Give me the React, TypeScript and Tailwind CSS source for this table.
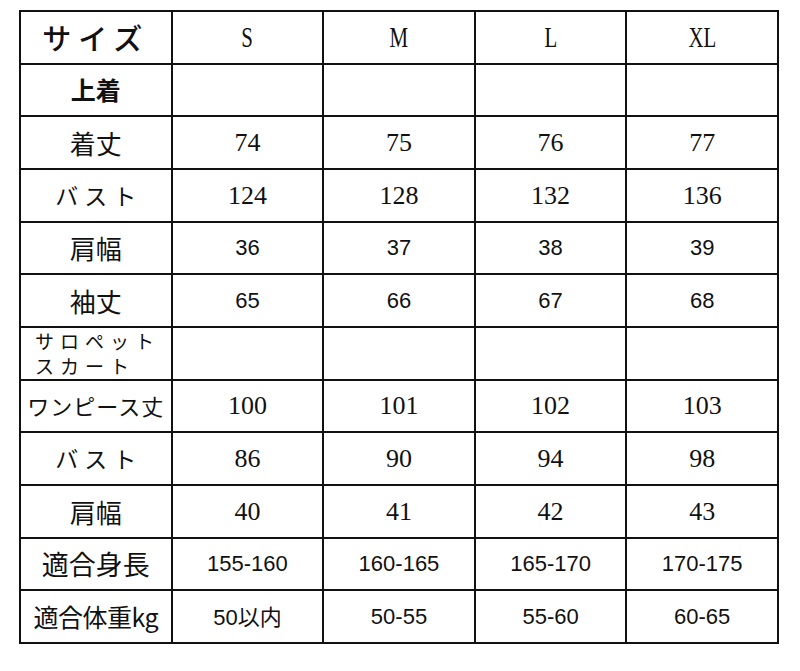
import React from "react";

type Kind = "serif" | "sans" | "blank";

const rows: { label: React.ReactNode; kind: Kind; values: string[] }[] = [
  { label: <span className="font-bold text-[25px]">上着</span>, kind: "blank", values: ["", "", "", ""] },
  { label: <span className="text-[26px]">着丈</span>, kind: "serif", values: ["74", "75", "76", "77"] },
  { label: <span className="text-[23px] tracking-[6px] pl-[6px]">バスト</span>, kind: "serif", values: ["124", "128", "132", "136"] },
  { label: <span className="text-[26px]">肩幅</span>, kind: "sans", values: ["36", "37", "38", "39"] },
  { label: <span className="text-[26px]">袖丈</span>, kind: "sans", values: ["65", "66", "67", "68"] },
  {
    label: (
      <div className="text-[19px] leading-[25px] tracking-[6px] text-left pl-[14px] w-full">
        <div>サロペット</div>
        <div>スカート</div>
      </div>
    ),
    kind: "blank",
    values: ["", "", "", ""],
  },
  { label: <span className="text-[22px] tracking-[1px]">ワンピース丈</span>, kind: "serif", values: ["100", "101", "102", "103"] },
  { label: <span className="text-[23px] tracking-[6px] pl-[6px]">バスト</span>, kind: "serif", values: ["86", "90", "94", "98"] },
  { label: <span className="text-[26px]">肩幅</span>, kind: "serif", values: ["40", "41", "42", "43"] },
  { label: <span className="text-[27px]">適合身長</span>, kind: "sans", values: ["155-160", "160-165", "165-170", "170-175"] },
  {
    label: <span className="text-[25px] tracking-[-0.5px]">適合体重kg</span>,
    kind: "sans",
    values: ["50以内", "50-55", "55-60", "60-65"],
  },
];

const cjk = "font-['Noto_Sans_CJK_JP','Noto_Sans',sans-serif]";

function Cell({ children, className = "" }: { children?: React.ReactNode; className?: string }) {
  return (
    <div className={`bg-white flex items-center justify-center text-[#111] overflow-hidden ${className}`}>{children}</div>
  );
}

function Value({ v, kind }: { v: string; kind: Kind }) {
  if (kind === "serif") {
    return <span className="font-['Liberation_Serif',serif] text-[26px]">{v}</span>;
  }
  if (v.includes("以内")) {
    return (
      <span className="text-[22px]">
        <span className="font-['Liberation_Sans',sans-serif]">50</span>
        <span className={`${cjk} text-[22px]`}>以内</span>
      </span>
    );
  }
  return <span className="font-['Liberation_Sans',sans-serif] text-[22px]">{v}</span>;
}

export default function App() {
  return (
    <div className="w-[800px] h-[671px] bg-white pt-[10px] pl-[19px]">
      <div className="w-[760px] h-[634px] bg-[#111] p-[2px] grid grid-cols-5 grid-rows-12 gap-[2px]">
        <Cell className={cjk}>
          <span className="text-[29px] tracking-[7px] font-medium">サイズ</span>
        </Cell>
        {["S", "M", "L", "XL"].map((s) => (
          <Cell key={s}>
            <span className="inline-block font-['Liberation_Serif',serif] text-[29px] scale-x-[0.72]">{s}</span>
          </Cell>
        ))}
        {rows.map((r, i) => (
          <React.Fragment key={i}>
            <Cell className={cjk}>{r.label}</Cell>
            {r.values.map((v, j) => (
              <Cell key={j}>{v ? <Value v={v} kind={r.kind} /> : null}</Cell>
            ))}
          </React.Fragment>
        ))}
      </div>
    </div>
  );
}
